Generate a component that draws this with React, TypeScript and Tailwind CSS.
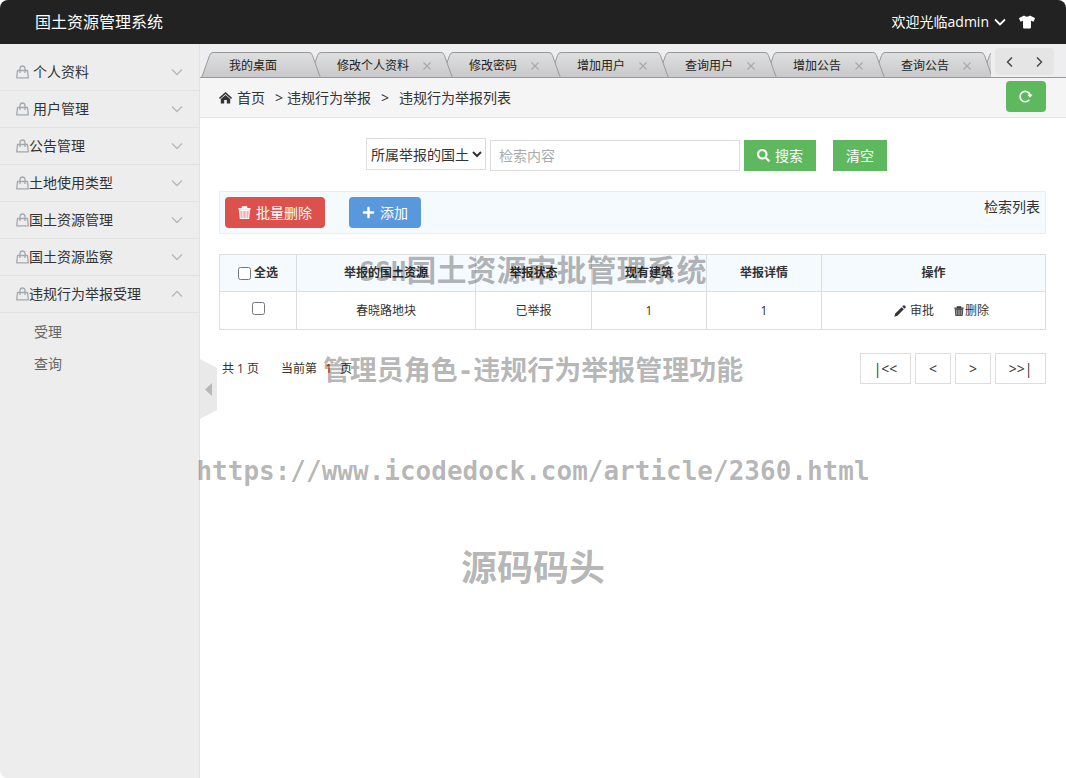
import clsx from "clsx";
import { ReactNode } from "react";
import { FaPlus, FaSearch, FaTshirt } from "react-icons/fa";

const menus = [
  { label: "个人资料", spaced: true },
  { label: "用户管理", spaced: true },
  { label: "公告管理" },
  { label: "土地使用类型" },
  { label: "国土资源管理" },
  { label: "国土资源监察" },
  { label: "违规行为举报受理", children: ["受理", "查询"] },
];

const tabs = [
  "我的桌面",
  "修改个人资料",
  "修改密码",
  "增加用户",
  "查询用户",
  "增加公告",
  "查询公告",
];

const rows = [{ resource: "春晓路地块", status: "已举报", building: "1", detail: "1" }];

function Bag() {
  return (
    <svg width="13" height="14" viewBox="0 0 13 14" fill="none" stroke="#a3a9b0" strokeWidth="1.3">
      <path d="M1.500 5.500h10l.8 7.300H.7z" strokeLinejoin="round" />
      <path d="M4 8V3.300Q4.200 1 6.500 1T9 3.300V8" />
    </svg>
  );
}

function Chevron({ className, d, thick }: { className?: string; d: string; thick?: boolean }) {
  return (
    <svg width="12" height="12" viewBox="0 0 12 12" fill="none" stroke="currentColor" className={className}>
      <path d={d} strokeWidth={thick ? 1.8 : 1.4} />
    </svg>
  );
}

function Home() {
  return (
    <svg width="13" height="12" viewBox="0 0 13 12" fill="#333">
      <path d="M6.5 0 13 5.800l-.9 1.200L6.500 2 .9 7 0 5.800z" />
      <path d="M6.500 2.900 11.200 7v4.600H7.800V8H5.200v3.600H1.800V7z" />
    </svg>
  );
}

function Trash({ size }: { size: number }) {
  return (
    <svg width={size} height={size} viewBox="0 0 12 12" fill="none" stroke="currentColor">
      <path d="M.4 2.600h11.200M4.200 2V1h3.600v1" strokeWidth="1.5" />
      <path d="M1.500 4h9l-.6 7.600H2.100z" fill="currentColor" fillOpacity=".55" strokeWidth="1" />
      <path d="M4.500 4.500v6.500M7.500 4.500v6.500" strokeWidth=".8" />
    </svg>
  );
}

function Pencil() {
  return (
    <svg width="12" height="12" viewBox="0 0 12 12" fill="#333">
      <path d="M.3 11.700 1.300 8.600 7.700 2.200 9.800 4.300 3.400 10.700z" />
      <path d="M8.300 1.600 9.500.4Q10 0 10.500.4L11.600 1.500Q12 2 11.600 2.500L10.400 3.700z" />
    </svg>
  );
}

function Refresh() {
  return (
    <svg width="16" height="14" viewBox="0 0 16 14" fill="none" stroke="#fff">
      <path d="M11.3 10.8A5.2 5.2 0 1 1 12.2 6" strokeWidth="1.6" />
      <path d="M9.4 5.6h5.2L12 8.8z" fill="#fff" stroke="none" />
    </svg>
  );
}

function Slope({ right }: { right?: boolean }) {
  return (
    <svg width="12" height="26" viewBox="0 0 12 26" className={clsx("shrink-0", right && "-scale-x-100")}>
      <defs>
        <linearGradient id="slope" x1="0" y1="0" x2="0" y2="1">
          <stop offset="0" stopColor="#dedfdf" />
          <stop offset="1" stopColor="#c8c8ca" />
        </linearGradient>
      </defs>
      <path d="M12 .5Q9.500 .5 8.500 3.500L2 22Q1 25 0 25.500V26H12z" fill="url(#slope)" />
      <path d="M12 .5Q9.500 .5 8.500 3.500L2 22Q1 25 0 25.500" fill="none" stroke="#999" />
    </svg>
  );
}

function Header() {
  return (
    <header className="flex h-11 items-center justify-between bg-[#222] pr-[31px] pl-[35px] text-white">
      <h1 className="text-base">国土资源管理系统</h1>
      <div className="flex items-center">
        <button className="flex items-center gap-1 text-sm">
          欢迎光临admin
          <Chevron d="M1 3.500 6 8.500 11 3.500" className="mx-px" thick />
        </button>
        <button aria-label="换肤" className="ml-3">
          <FaTshirt size={16} />
        </button>
      </div>
    </header>
  );
}

function Sidebar() {
  return (
    <aside className="relative w-[200px] shrink-0 border-r border-[#e2e2e2] bg-[#ededed] pt-[10px] text-sm text-[#333]">
      {menus.map((menu) => (
        <div key={menu.label}>
          <button className="flex h-[37px] w-full items-center border-b border-[#e2e2e2] px-4">
            <Bag />
            <span className={clsx(menu.spaced && "ml-1")}>{menu.label}</span>
            <Chevron
              d={menu.children ? "M1 8.500 6 3.500 11 8.500" : "M1 3.500 6 8.500 11 3.500"}
              className="ml-auto text-[#b8b8b8]"
            />
          </button>
          {menu.children && (
            <ul className="py-[3px]">
              {menu.children.map((child) => (
                <li key={child}>
                  <a href="#" className="flex h-8 items-center pl-[34px] text-[#666]">
                    {child}
                  </a>
                </li>
              ))}
            </ul>
          )}
        </div>
      ))}
      <button aria-label="收起菜单" className="absolute top-[315px] left-full z-20 ml-px">
        <svg width="17" height="60" viewBox="0 0 17 60">
          <path d="M0 0 17 9V51L0 60z" fill="#e9e9e9" />
          <path d="M12 24v13L5 30.500z" fill="#b8b8b8" />
        </svg>
      </button>
    </aside>
  );
}

function TabBar() {
  return (
    <div className="flex h-[34px] border-b border-[#999] bg-[#eeeef0] pl-px">
      <div className="flex min-w-0 flex-1 overflow-hidden pt-2 text-xs text-[#222]">
        {tabs.map((tab, i) => (
          <div key={tab} className="relative -mr-3 flex h-[26px] shrink-0" style={{ zIndex: 10 - i }}>
            <Slope />
            <div className="flex items-center border-t border-[#999] bg-linear-to-b from-[#dedfdf] to-[#c8c8ca] pl-4">
              <button>{tab}</button>
              {i > 0 ? (
                <button aria-label={"关闭" + tab} className="ml-[14px] pr-[10px]">
                  <svg width="8" height="8" viewBox="0 0 8 8" stroke="#a6aab0">
                    <path d="M.5 .5l7 7M7.500 .5l-7 7" strokeWidth="1.2" />
                  </svg>
                </button>
              ) : (
                <span className="w-8" />
              )}
            </div>
            <Slope right />
          </div>
        ))}
        <Slope />
      </div>
      <div className="mt-1 mr-3 ml-1 flex h-[27px] w-[59px] items-center justify-around rounded bg-[#e5e5e5] text-[#444]">
        <button aria-label="向左">
          <Chevron d="M8 1.500 3.500 6 8 10.500" />
        </button>
        <button aria-label="向右">
          <Chevron d="M4 1.500 8.500 6 4 10.500" />
        </button>
      </div>
    </div>
  );
}

function Breadcrumb() {
  return (
    <nav className="flex h-10 items-center border-b border-[#e5e5e5] bg-[#f5f5f5] pr-5 pl-[19px] text-sm text-[#333]">
      <Home />
      <a href="#" className="ml-[5px]">首页</a>
      <span className="mr-1 ml-[10px]">&gt;</span>
      <span>违规行为举报</span>
      <span className="mx-[10px]">&gt;</span>
      <span>违规行为举报列表</span>
      <button
        aria-label="刷新"
        className="mb-[3px] ml-auto flex h-[31px] w-10 items-center justify-center rounded bg-[#5eb95e]"
      >
        <Refresh />
      </button>
    </nav>
  );
}

function SearchForm() {
  return (
    <form className="flex items-end justify-center pr-3 text-sm">
      <select
        aria-label="检索条件"
        className="mb-px h-8 w-[120px] border border-[#ddd] bg-white text-[#333]"
      >
        <option>所属举报的国土资源</option>
      </select>
      <input
        aria-label="检索内容"
        placeholder="检索内容"
        className="ml-1 h-[31px] w-[250px] border border-[#ddd] px-2 placeholder:text-[#aaa]"
      />
      <button type="button" className="ml-1 flex h-[31px] items-center gap-[5px] bg-[#5eb95e] px-[13px] text-white">
        <FaSearch size={13} />
        搜索
      </button>
      <button type="reset" className="ml-[17px] h-[31px] bg-[#5eb95e] px-[13px] text-white">
        清空
      </button>
    </form>
  );
}

function Toolbar() {
  return (
    <div className="mt-5 flex items-start border border-[#e8eef2] bg-[#f5fafe] p-[5px] text-sm">
      <button className="flex h-[31px] items-center gap-[5px] rounded bg-[#dd514c] px-[13px] text-white">
        <Trash size={13} />
        批量删除
      </button>
      <button className="ml-6 flex h-[31px] items-center gap-[5px] rounded bg-[#5a98de] px-[13px] text-white">
        <FaPlus size={13} />
        添加
      </button>
      <span className="ml-auto text-[#333]">检索列表</span>
    </div>
  );
}

function Th({ children, className }: { children: ReactNode; className?: string }) {
  return <th className={clsx("h-[37px] border border-[#ddd] font-bold", className)}>{children}</th>;
}

function Td({ children }: { children: ReactNode }) {
  return <td className="h-[38px] border border-[#ddd]">{children}</td>;
}

function ReportTable() {
  return (
    <table className="mt-5 w-full table-fixed border-collapse text-center text-xs text-[#333]">
      <thead className="bg-[#f5fafe]">
        <tr>
          <Th className="w-[77px]">
            <label className="flex items-center justify-center gap-[3px]">
              <input type="checkbox" className="size-[13px]" />
              全选
            </label>
          </Th>
          <Th className="w-[179px]">举报的国土资源</Th>
          <Th className="w-[116px]">举报状态</Th>
          <Th className="w-[115px]">现有建筑</Th>
          <Th className="w-[115px]">举报详情</Th>
          <Th>操作</Th>
        </tr>
      </thead>
      <tbody>
        {rows.map((row) => (
          <tr key={row.resource}>
            <Td>
              <input type="checkbox" aria-label={row.resource} className="mb-1 size-[13px] align-middle" />
            </Td>
            <Td>{row.resource}</Td>
            <Td>{row.status}</Td>
            <Td>{row.building}</Td>
            <Td>{row.detail}</Td>
            <Td>
              <div className="flex items-center justify-center pl-4">
                <a href="#" className="flex items-center gap-1">
                  <Pencil />
                  审批
                </a>
                <a href="#" className="ml-5 flex items-center gap-px">
                  <Trash size={10} />
                  删除
                </a>
              </div>
            </Td>
          </tr>
        ))}
      </tbody>
    </table>
  );
}

function Pager() {
  return (
    <div className="mt-[23px] flex items-center justify-between pl-[3px] text-xs text-[#333]">
      <div className="flex">
        <span>共 1 页</span>
        <span className="ml-[22px]">当前第</span>
        <span className="mx-2 text-red-600">1</span>
        <span>页</span>
      </div>
      <div className="flex gap-1 text-sm">
        {["|<<", "<", ">", ">>|"].map((label) => (
          <button
            key={label}
            className={clsx("h-[31px] border border-[#ddd]", label.length > 1 ? "w-[51px]" : "w-9")}
          >
            {label}
          </button>
        ))}
      </div>
    </div>
  );
}

function Mono({ children }: { children: ReactNode }) {
  return <span className="font-['DejaVu_Sans_Mono',monospace] text-[26px]">{children}</span>;
}

function Watermark() {
  return (
    <div className="pointer-events-none absolute inset-x-0 top-[248px] z-30 flex flex-col items-center font-bold whitespace-nowrap text-black/30">
      <p className="text-[30px] leading-[44px]">
        <Mono>SSH</Mono>国土资源审批管理系统
      </p>
      <p className="mt-[54px] text-[27px] leading-[44px]">
        管理员角色<Mono>-</Mono>违规行为举报管理功能
      </p>
      <p className="mt-14 leading-[44px]">
        <Mono>https://www.icodedock.com/article/2360.html</Mono>
      </p>
      <p className="mt-12 text-4xl leading-[48px]">源码码头</p>
    </div>
  );
}

export default function App() {
  return (
    <div className="relative flex min-h-screen flex-col overflow-hidden rounded-lg bg-white font-['Open_Sans','Noto_Sans_CJK_SC',sans-serif]">
      <Header />
      <div className="flex flex-1">
        <Sidebar />
        <main className="min-w-0 flex-1">
          <TabBar />
          <Breadcrumb />
          <div className="py-5 pr-5 pl-[19px]">
            <SearchForm />
            <Toolbar />
            <ReportTable />
            <Pager />
          </div>
        </main>
      </div>
      <Watermark />
    </div>
  );
}
